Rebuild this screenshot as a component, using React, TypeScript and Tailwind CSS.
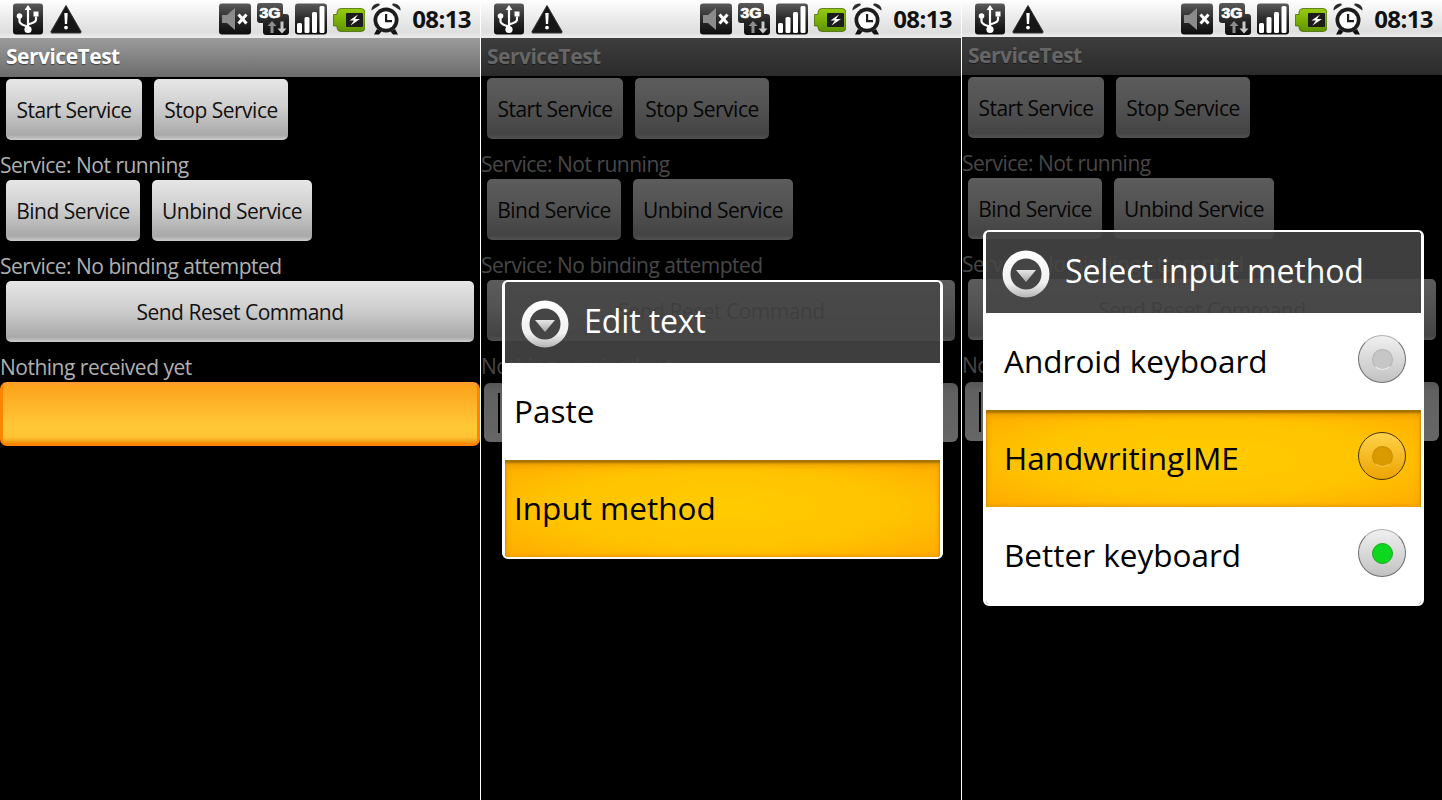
import React from 'react';

const font = 'font-["Open_Sans","Noto_Sans",sans-serif]';

const UsbIcon = () => (
  <svg width="30" height="32" viewBox="0 0 30 32" className="shrink-0">
    <defs>
      <linearGradient id="box" x1="0" y1="0" x2="0" y2="1">
        <stop offset="0" stopColor="#5a5a5a" />
        <stop offset="0.5" stopColor="#2a2a2a" />
        <stop offset="1" stopColor="#0c0c0c" />
      </linearGradient>
      <linearGradient id="batt" x1="0" y1="0" x2="0" y2="1">
        <stop offset="0" stopColor="#96cc10" />
        <stop offset="1" stopColor="#5f9400" />
      </linearGradient>
    </defs>
    <rect x="0" y="0.5" width="30" height="31" rx="3" fill="url(#box)" />
    <path d="M15 2l3.4 5h-2.3v18h-2.2V7h-2.3z" fill="#fff" />
    <circle cx="15" cy="26.5" r="3.6" fill="#fff" />
    <path d="M15 24c-3 -2 -8.5 -2 -8.5 -6v-3" fill="none" stroke="#fff" strokeWidth="2.2" />
    <circle cx="6.5" cy="13" r="2.8" fill="#fff" />
    <path d="M15 21.500c3 -1.500 8 -1.500 8 -5v-3" fill="none" stroke="#fff" strokeWidth="2.2" />
    <rect x="20.5" y="8.5" width="5" height="5" fill="#fff" />
  </svg>
);

const WarningIcon = () => (
  <svg width="32" height="30" viewBox="0 0 32 30" className="ml-[7px] shrink-0">
    <path d="M16 1.5L31 27.5a1 1 0 0 1 -1 1.5H2a1 1 0 0 1 -1 -1.5z" fill="#161616" stroke="#333" strokeLinejoin="round" />
    <path d="M14.3 9h3.4l-.6 11h-2.2z" fill="#fff" />
    <circle cx="16" cy="23.6" r="1.9" fill="#fff" />
  </svg>
);

const MuteIcon = () => (
  <svg width="32" height="32" viewBox="0 0 32 32" className="shrink-0">
    <rect x="0" y="0.5" width="32" height="31" rx="3" fill="url(#box)" />
    <path d="M3 12h5l8 -7v22l-8 -7H3z" fill="#8b8b8b" />
    <path d="M19.5 11.5l8 9M27.5 11.5l-8 9" stroke="#fff" strokeWidth="3" />
  </svg>
);

const NetworkIcon = () => (
  <svg width="32" height="32" viewBox="0 0 32 32" className="shrink-0">
    <path d="M0 3a3 3 0 0 1 3 -3h20a3 3 0 0 1 3 3v8h3a3 3 0 0 1 3 3v15a3 3 0 0 1 -3 3H9a3 3 0 0 1 -3 -3v-9H3a3 3 0 0 1 -3 -3z" fill="url(#box)" />
    <text x="2.5" y="14.500" fontFamily="Liberation Sans, sans-serif" fontWeight="700" fontSize="14.500" fill="#fff" stroke="#fff" strokeWidth="0.7" textLength="21" lengthAdjust="spacingAndGlyphs">3G</text>
    <path d="M15 18l4.500 5h-3v7h-3v-7h-3z" fill="#8d8d8d" />
    <path d="M25 30.500l-4.500 -5h3v-7h3v7h3z" fill="#c9c9c9" />
  </svg>
);

const SignalIcon = () => (
  <svg width="32" height="32" viewBox="0 0 32 32" className="shrink-0">
    <rect x="0" y="0.5" width="32" height="31" rx="3" fill="url(#box)" />
    <rect x="2" y="20" width="5" height="10" rx="1.5" fill="#fff" />
    <rect x="9.5" y="14" width="5" height="16" rx="1.5" fill="#fff" />
    <rect x="17" y="9" width="5" height="21" rx="1.5" fill="#fff" />
    <rect x="24.5" y="3" width="5" height="27" rx="1.5" fill="#fff" />
  </svg>
);

const BatteryIcon = () => (
  <svg width="32" height="24" viewBox="0 0 32 24" className="mt-[2px] shrink-0">
    <path d="M8 0.500h20a4 4 0 0 1 4 3.500v16a4 4 0 0 1 -4 3.500H8a4 4 0 0 1 -4 -3.500v-2H0.500V6.500H4V4a4 4 0 0 1 4 -3.500z" fill="url(#batt)" stroke="#4a6a08" strokeWidth="0.8" />
    <path d="M14 5h15a1 1 0 0 1 1 1v12a1 1 0 0 1 -1 1H14a1 1 0 0 1 -1 -1V6a1 1 0 0 1 1 -1z" fill="#1c1c1c" />
    <path d="M25 6.500l-8.500 6h4.500l-3.500 5 9.500 -6.500h-5l3 -4.500z" fill="#fff" />
  </svg>
);

const AlarmIcon = () => (
  <svg width="30" height="32" viewBox="0 0 30 32" className="shrink-0">
    <path d="M0.500 7.500c-0.500 -3.500 3 -7.500 7.500 -7l1 1.500z" fill="#2a2a2a" />
    <path d="M29.500 7.500c0.500 -3.500 -3 -7.500 -7.500 -7l-1 1.500z" fill="#2a2a2a" />
    <path d="M6 26l-3 5.500h5l2.500 -3zM24 26l3 5.500h-5l-2.500 -3z" fill="#111" />
    <circle cx="15" cy="17" r="12.500" fill="#1c1c1c" />
    <circle cx="15" cy="17" r="8.800" fill="#fff" />
    <path d="M14 11h2.200v6H21v2.200h-7z" fill="#1c1c1c" />
  </svg>
);

const StatusBar = ({ height }: { height: string }) => (
  <div className={`${height} flex items-center justify-between overflow-visible bg-[linear-gradient(#ffffff_0%,#f2f2f2_30%,#dedede_85%,#ececec_100%)] pl-[13px] pr-[9px]`}>
    <div className="flex items-center">
      <UsbIcon />
      <WarningIcon />
    </div>
    <div className="flex items-center gap-[6px]">
      <MuteIcon />
      <NetworkIcon />
      <SignalIcon />
      <BatteryIcon />
      <AlarmIcon />
      <span className="ml-[5px] text-[24px] leading-none font-bold tracking-[-0.6px] text-[#111]">08:13</span>
    </div>
  </div>
);

const Btn = ({ label, className }: { label: string; className: string }) => (
  <div className={`flex h-[61px] items-center justify-center rounded-[5px] bg-[linear-gradient(#e6e6e6_0%,#cfcfcf_45%,#a9a9a9_92%,#cccccc_100%)] pt-[2px] text-[21px] tracking-[-0.5px] text-[#111] ${className}`}>
    {label}
  </div>
);

const Label = ({ text }: { text: string }) => (
  <div className="h-[40px] pt-[10px] text-[21px] leading-[30px] tracking-[-0.5px] text-[#b0b0b0]">{text}</div>
);

const Content = ({ focused }: { focused: boolean }) => (
  <div className="flex flex-col">
    <div className="flex gap-[12px] pl-[6px]">
      <Btn label="Start Service" className="w-[136px]" />
      <Btn label="Stop Service" className="w-[134px]" />
    </div>
    <Label text="Service: Not running" />
    <div className="flex gap-[12px] pl-[6px]">
      <Btn label="Bind Service" className="w-[134px]" />
      <Btn label="Unbind Service" className="w-[160px]" />
    </div>
    <Label text="Service: No binding attempted" />
    <div className="px-[6px]">
      <Btn label="Send Reset Command" className="w-full" />
    </div>
    <Label text="Nothing received yet" />
    {focused ? (
      <div className="h-[64px] rounded-[7px] border-[3px] border-[#ff8400] border-t-[#ff9d2e] bg-[linear-gradient(#fba31a_0%,#ffb52a_35%,#ffc836_72%,#ffc233_90%,#ec9610_100%)]" />
    ) : (
      <div className="mx-[3px] mt-[2px] flex h-[59px] items-center rounded-[6px] bg-[linear-gradient(#d8d8d8,#f2f2f2_15%,#ffffff)] pl-[14px]">
        <div className="h-[40px] w-[2px] bg-black" />
      </div>
    )}
  </div>
);

const DialogIcon = () => (
  <svg width="48" height="48" viewBox="0 0 48 48" className="mt-[3px] shrink-0">
    <defs>
      <linearGradient id="ring" x1="0" y1="0" x2="0" y2="1">
        <stop offset="0" stopColor="#ffffff" />
        <stop offset="0.7" stopColor="#f0f0f0" />
        <stop offset="1" stopColor="#b5b5b5" />
      </linearGradient>
      <linearGradient id="tri" x1="0" y1="0" x2="0" y2="1">
        <stop offset="0" stopColor="#e8e8e8" />
        <stop offset="1" stopColor="#a8a8a8" />
      </linearGradient>
    </defs>
    <circle cx="24" cy="24" r="23.5" fill="url(#ring)" />
    <circle cx="24" cy="24" r="15.5" fill="#454545" />
    <path d="M14 20h20L24 32z" fill="url(#tri)" />
  </svg>
);

const DialogHeader = ({ title }: { title: string }) => (
  <div className="flex h-[81px] shrink-0 items-center gap-[15px] bg-[#474747]/88 pl-[16px] text-[32px] tracking-[-0.1px] text-white">
    <DialogIcon />
    <span className="mb-[4px]">{title}</span>
  </div>
);

const Selected = 'bg-[radial-gradient(ellipse_at_center,#ffcb00_0%,#ffc400_55%,#ffaa00_100%)] shadow-[inset_0_3px_2px_#a87400,inset_0_5px_6px_#e59a00,inset_0_-2px_3px_#f0a000]';

const Radio = ({ state }: { state: 'off' | 'hover' | 'on' }) => (
  <div
    className={`mb-[5px] flex size-[48px] shrink-0 items-center justify-center rounded-full border ${
      state === 'hover'
        ? 'border-[#4a3500] bg-[linear-gradient(#ffd24a,#eda400)]'
        : 'border-[#6e6e6e] border-t-[#b0b0b0] bg-[linear-gradient(#f0f0f0,#c2c2c2)]'
    }`}
  >
    {state === 'off' && <div className="size-[21px] rounded-full border border-[#b4b4b4] border-b-[#ececec] bg-[#c6c6c6]" />}
    {state === 'hover' && <div className="size-[21px] rounded-full border border-[#c98f00] border-b-[#f6c550] bg-[#d99a00]" />}
    {state === 'on' && <div className="size-[21px] rounded-full border border-[#18a818] bg-[#0bd81f]" />}
  </div>
);

const ListRow = ({ label, selected, state, inset }: { label: string; selected?: boolean; state?: 'off' | 'hover' | 'on'; inset: string }) => (
  <div className={`flex h-[97px] items-center justify-between pr-[15px] text-[31.5px] text-black ${inset} ${selected ? Selected : 'bg-white'}`}>
    <span className="mb-[2px]">{label}</span>
    {state && <Radio state={state} />}
  </div>
);

const Phone = ({ status, title, dim, children, focused }: { status: string; title: string; dim?: string; children?: React.ReactNode; focused: boolean }) => (
  <div className="relative h-[800px] w-[480px] shrink-0 overflow-hidden bg-black">
    <StatusBar height={status} />
    <div className={`flex items-center bg-[linear-gradient(#9b9b9b,#6c6c6c)] pb-[1px] pl-[6px] text-[21px] font-bold tracking-[-0.5px] text-white [text-shadow:0_1px_1px_rgba(0,0,0,0.5)] ${title}`}>
      ServiceTest
    </div>
    <div className="pt-[2px]">
      <Content focused={focused} />
    </div>
    {dim && <div className={`absolute inset-x-0 bottom-0 bg-black/60 ${dim}`} />}
    {children}
  </div>
);

export default function App() {
  return (
    <div className={`flex h-[800px] w-[1442px] overflow-hidden bg-white ${font}`}>
      <Phone status="h-[38px]" title="h-[39px]" focused />
      <div className="w-px shrink-0 bg-white" />
      <Phone status="h-[38px]" title="h-[38px]" dim="top-[38px]" focused={false}>
        <div className="absolute top-[280px] left-[21px] flex w-[441px] flex-col overflow-hidden rounded-[6px] border-2 border-x-[3px] border-white">
          <DialogHeader title="Edit text" />
          <ListRow label="Paste" inset="pl-[9px]" />
          <ListRow label="Input method" inset="pl-[9px]" selected />
        </div>
      </Phone>
      <div className="w-px shrink-0 bg-white" />
      <Phone status="h-[37px]" title="h-[38px]" dim="top-[37px]" focused={false}>
        <div className="absolute top-[230px] left-[21px] flex w-[441px] flex-col overflow-hidden rounded-[6px] border-2 border-x-[3px] border-white">
          <DialogHeader title="Select input method" />
          <ListRow label="Android keyboard" inset="pl-[18px]" state="off" />
          <ListRow label="HandwritingIME" inset="pl-[18px]" selected state="hover" />
          <ListRow label="Better keyboard" inset="pl-[18px]" state="on" />
        </div>
      </Phone>
    </div>
  );
}
